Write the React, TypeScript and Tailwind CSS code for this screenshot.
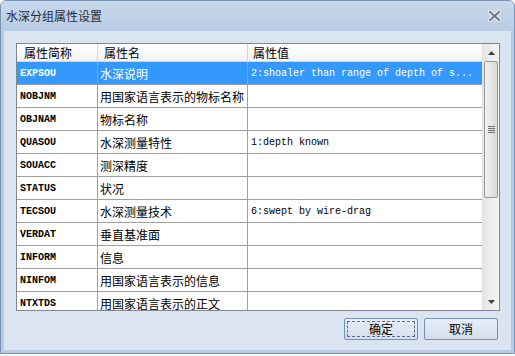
import React from 'react';

type Row = { code: string; name: string; value: string };

const rows: Row[] = [
  { code: 'EXPSOU', name: '水深说明', value: '2:shoaler than range of depth of s...' },
  { code: 'NOBJNM', name: '用国家语言表示的物标名称', value: '' },
  { code: 'OBJNAM', name: '物标名称', value: '' },
  { code: 'QUASOU', name: '水深测量特性', value: '1:depth known' },
  { code: 'SOUACC', name: '测深精度', value: '' },
  { code: 'STATUS', name: '状况', value: '' },
  { code: 'TECSOU', name: '水深测量技术', value: '6:swept by wire-drag' },
  { code: 'VERDAT', name: '垂直基准面', value: '' },
  { code: 'INFORM', name: '信息', value: '' },
  { code: 'NINFOM', name: '用国家语言表示的信息', value: '' },
  { code: 'NTXTDS', name: '用国家语言表示的正文', value: '' },
];

const cjk = "font-['Noto_Sans_CJK_SC',sans-serif]";
const mono = "font-['Liberation_Mono','DejaVu_Sans_Mono',monospace]";

function CloseIcon() {
  return (
    <svg width="13" height="12" viewBox="0 0 13 12">
      <path d="M2 2 L11 10 M11 2 L2 10" stroke="#f4f7fb" strokeWidth="4" strokeLinecap="square" />
      <path d="M2 2 L11 10 M11 2 L2 10" stroke="#6b7788" strokeWidth="2" strokeLinecap="square" />
    </svg>
  );
}

function ScrollBar() {
  return (
    <div className="w-[17px] flex flex-col bg-gradient-to-r from-[#e6e6e6] to-[#f5f5f5] border-l border-[#e0e0e0]">
      <div className="h-[17px] flex items-center justify-center">
        <svg width="7" height="4" viewBox="0 0 7 4"><path d="M0 4 L3.5 0 L7 4 Z" fill="#404040" /></svg>
      </div>
      <div className="h-[137px] mx-[1px] rounded-[2px] border border-[#979797] bg-gradient-to-r from-[#f2f2f2] to-[#d8d8d8] flex items-center justify-center">
        <div className="flex flex-col gap-[1px]">
          <div className="w-[7px] h-[1px] bg-[#6e6e6e]" />
          <div className="w-[7px] h-[1px] bg-[#6e6e6e]" />
          <div className="w-[7px] h-[1px] bg-[#6e6e6e]" />
          <div className="w-[7px] h-[1px] bg-[#6e6e6e]" />
        </div>
      </div>
      <div className="flex-1" />
      <div className="h-[17px] flex items-center justify-center">
        <svg width="7" height="4" viewBox="0 0 7 4"><path d="M0 0 L3.5 4 L7 0 Z" fill="#404040" /></svg>
      </div>
    </div>
  );
}

export default function App() {
  return (
    <div className="w-[515px] h-[356px] bg-white">
      <div className="w-[515px] h-[354px] flex flex-col rounded-t-[6px] border border-[#7b93b2] bg-[#dbe5f1] overflow-hidden">
        <div className="h-[30px] flex items-center justify-between pl-[5px] pr-[13px] bg-gradient-to-b from-[#c9d9ec] to-[#b7cbe3]">
          <span className={`${cjk} text-[12px] text-[#1e2a3a]`}>水深分组属性设置</span>
          <CloseIcon />
        </div>
        <div className="flex-1 flex flex-col border-x-[3px] border-b-[3px] border-[#b9cbe2] bg-[#dbe5f1]">
          <div className="mt-[12px] ml-[12px] w-[484px] h-[268px] border border-[#828790] bg-white flex overflow-hidden">
            <div className="flex-1 flex flex-col">
              <div className={`h-[18px] shrink-0 flex border-b border-[#d5d5d5] bg-gradient-to-b from-white to-[#f3f3f3] ${cjk} text-[12px] text-black leading-[17px]`}>
                <div className="w-[81px] border-r border-[#d5d5d5] pl-[7px]">属性简称</div>
                <div className="w-[150px] border-r border-[#d5d5d5] pl-[6px]">属性名</div>
                <div className="flex-1 pl-[5px]">属性值</div>
              </div>
              {rows.map((r, i) => {
                const sel = i === 0;
                return (
                  <div
                    key={r.code}
                    className={`h-[23px] shrink-0 flex border-b border-[#a0a0a0] ${sel ? 'bg-[#3399ff] text-white' : 'text-black'}`}
                  >
                    <div className={`w-[81px] border-r border-[#a0a0a0] pl-[3px] pt-[1px] flex items-center ${mono} text-[10px] font-bold`}>{r.code}</div>
                    <div className={`w-[150px] border-r border-[#a0a0a0] pl-[2px] pt-[2px] flex items-center ${cjk} text-[12px] whitespace-nowrap overflow-hidden`}>{r.name}</div>
                    <div className={`flex-1 pl-[3px] pt-[1px] flex items-center ${mono} text-[10px] whitespace-nowrap`}>{r.value}</div>
                  </div>
                );
              })}
            </div>
            <ScrollBar />
          </div>
          <div className="flex justify-end gap-[6px] mt-[7px] mr-[13px]">
            <button className={`w-[74px] h-[22px] border border-[#7590b5] rounded-[2px] bg-gradient-to-b from-[#e9eff8] to-[#d3deed] p-[2px] ${cjk} text-[12px] text-black`}>
              <div className="w-full h-full border border-dashed border-[#5b6f8c] flex items-center justify-center">确定</div>
            </button>
            <button className={`w-[74px] h-[22px] border border-[#7590b5] rounded-[2px] bg-gradient-to-b from-[#e9eff8] to-[#d3deed] flex items-center justify-center ${cjk} text-[12px] text-black`}>
              取消
            </button>
          </div>
        </div>
      </div>
    </div>
  );
}
